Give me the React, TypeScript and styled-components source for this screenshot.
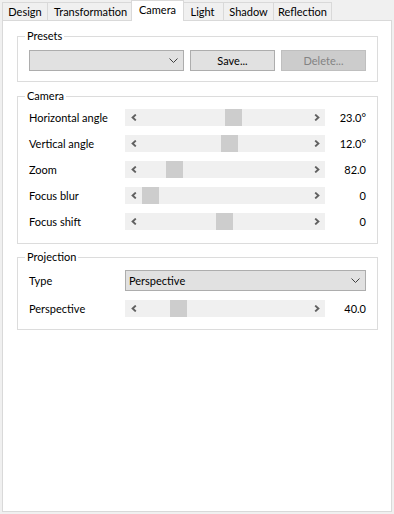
import React from 'react';
import styled, { createGlobalStyle } from 'styled-components';

const GlobalStyle = createGlobalStyle`
  html, body {
    margin: 0;
    background: #f0f0f0;
  }
  body {
    font-family: "Segoe UI", Lato, "Open Sans", sans-serif;
    font-size: 11px;
    color: #000;
  }
`;

const Page = styled.div`
  width: 394px;
  height: 514px;
  box-sizing: border-box;
  padding: 0 2px 2px;
  display: flex;
  flex-direction: column;
`;

const TabStrip = styled.div`
  height: 20px;
  display: flex;
  align-items: flex-end;
  flex-shrink: 0;
`;

const Tab = styled.div<{ $w: number; $active?: boolean }>`
  box-sizing: border-box;
  width: ${(p) => p.$w}px;
  height: ${(p) => (p.$active ? 21 : 18)}px;
  margin: 0 ${(p) => (p.$active ? -3 : -1)}px ${(p) => (p.$active ? -1 : 0)}px
    ${(p) => (p.$active ? -2 : 0)}px;
  border: 1px solid #d9d9d9;
  border-bottom: none;
  background: ${(p) => (p.$active ? '#fff' : '#f0f0f0')};
  position: relative;
  z-index: ${(p) => (p.$active ? 2 : 1)};
  display: flex;
  align-items: center;
  justify-content: center;
  padding-bottom: ${(p) => (p.$active ? 2 : 0)}px;
  line-height: 14px;
  white-space: nowrap;
`;

const Panel = styled.div`
  flex: 1;
  background: #fff;
  border: 1px solid #d9d9d9;
  padding: 8px 13px 0 14px;
  display: flex;
  flex-direction: column;
`;

const Group = styled.fieldset<{ $mt: number; $pt: number; $pb: number }>`
  margin: ${(p) => p.$mt}px 0 0;
  min-width: 0;
  border: 1px solid #dcdcdc;
  padding: ${(p) => p.$pt}px 11px ${(p) => p.$pb}px;
`;

const GroupTitle = styled.legend`
  margin-left: -4px;
  padding: 0 2px;
  height: 14px;
  line-height: 14px;
`;

const PresetBar = styled.div`
  display: flex;
  gap: 6px;
`;

const Combo = styled.div<{ $span?: boolean }>`
  box-sizing: border-box;
  height: 21px;
  flex: 1;
  grid-column: ${(p) => (p.$span ? '2 / 4' : 'auto')};
  background: #e1e1e1;
  border: 1px solid #adadad;
  display: flex;
  align-items: center;
  justify-content: space-between;
  padding: 0 5px 0 3px;
  line-height: 14px;
`;

const Button = styled.div<{ $disabled?: boolean }>`
  box-sizing: border-box;
  width: 85px;
  height: 21px;
  background: ${(p) => (p.$disabled ? '#cccccc' : '#e1e1e1')};
  border: 1px solid ${(p) => (p.$disabled ? '#bfbfbf' : '#adadad')};
  color: ${(p) => (p.$disabled ? '#838383' : '#000')};
  display: flex;
  align-items: center;
  justify-content: center;
  line-height: 14px;
`;

const Rows = styled.div`
  display: grid;
  grid-template-columns: 96px 200px 1fr;
  row-gap: 9px;
  align-items: center;
`;

const Label = styled.div`
  line-height: 14px;
  white-space: nowrap;
`;

const Value = styled.div`
  text-align: right;
  line-height: 14px;
`;

const Track = styled.div`
  height: 17px;
  background: #f0f0f0;
  display: flex;
  align-items: stretch;
`;

const ArrowBox = styled.div`
  width: 17px;
  flex-shrink: 0;
  display: flex;
  align-items: center;
  justify-content: center;
`;

const Lane = styled.div`
  flex: 1;
  display: flex;
`;

const Thumb = styled.div`
  width: 17px;
  background: #cdcdcd;
`;

const Arrow = ({ dir }: { dir: 'left' | 'right' }) => (
  <svg width="6" height="7" viewBox="0 0 6 7">
    <polyline
      points={dir === 'left' ? '4.8,0.6 1.6,3.5 4.8,6.4' : '1.2,0.6 4.4,3.5 1.2,6.4'}
      fill="none"
      stroke="#606060"
      strokeWidth="1.9"
    />
  </svg>
);

const Chevron = () => (
  <svg width="9" height="5" viewBox="0 0 9 5">
    <polyline points="0.5,0.5 4.5,4.5 8.5,0.5" fill="none" stroke="#404040" strokeWidth="1" />
  </svg>
);

const Slider = ({ pos }: { pos: number }) => (
  <Track>
    <ArrowBox>
      <Arrow dir="left" />
    </ArrowBox>
    <Lane>
      <Thumb style={{ marginLeft: Math.round(pos * 148) }} />
    </Lane>
    <ArrowBox>
      <Arrow dir="right" />
    </ArrowBox>
  </Track>
);

const tabs = [
  { name: 'Design', w: 46 },
  { name: 'Transformation', w: 87 },
  { name: 'Camera', w: 53, active: true },
  { name: 'Light', w: 43 },
  { name: 'Shadow', w: 51 },
  { name: 'Reflection', w: 59 },
];

const cameraRows = [
  { label: 'Horizontal angle', pos: 0.56, value: '23.0°' },
  { label: 'Vertical angle', pos: 0.534, value: '12.0°' },
  { label: 'Zoom', pos: 0.162, value: '82.0' },
  { label: 'Focus blur', pos: 0, value: '0' },
  { label: 'Focus shift', pos: 0.5, value: '0' },
];

export default function App() {
  return (
    <>
      <GlobalStyle />
      <Page>
        <TabStrip>
          {tabs.map((t) => (
            <Tab key={t.name} $w={t.w} $active={t.active}>
              {t.name}
            </Tab>
          ))}
        </TabStrip>
        <Panel>
          <Group $mt={0} $pt={7} $pb={10}>
            <GroupTitle>Presets</GroupTitle>
            <PresetBar>
              <Combo>
                <span />
                <Chevron />
              </Combo>
              <Button>Save...</Button>
              <Button $disabled>Delete...</Button>
            </PresetBar>
          </Group>
          <Group $mt={7} $pt={6} $pb={13}>
            <GroupTitle>Camera</GroupTitle>
            <Rows>
              {cameraRows.map((r) => (
                <React.Fragment key={r.label}>
                  <Label>{r.label}</Label>
                  <Slider pos={r.pos} />
                  <Value>{r.value}</Value>
                </React.Fragment>
              ))}
            </Rows>
          </Group>
          <Group $mt={6} $pt={6} $pb={12}>
            <GroupTitle>Projection</GroupTitle>
            <Rows>
              <Label>Type</Label>
              <Combo $span>
                <span>Perspective</span>
                <Chevron />
              </Combo>
              <Label>Perspective</Label>
              <Slider pos={0.189} />
              <Value>40.0</Value>
            </Rows>
          </Group>
        </Panel>
      </Page>
    </>
  );
}
